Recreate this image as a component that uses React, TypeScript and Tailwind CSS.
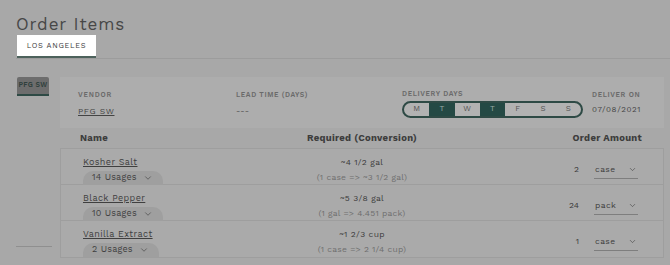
import { ChevronDown } from "lucide-react"

type Item = {
    name: string
    usages: number
    required: string
    conversion: string
    qty: string
    unit: string
}

const items: Item[] = [
    { name: "Kosher Salt", usages: 14, required: "~4 1/2 gal", conversion: "(1 case => ~3 1/2 gal)", qty: "2", unit: "case" },
    { name: "Black Pepper", usages: 10, required: "~5 3/8 gal", conversion: "(1 gal => 4.451 pack)", qty: "24", unit: "pack" },
    { name: "Vanilla Extract", usages: 2, required: "~1 2/3 cup", conversion: "(1 case => 2 1/4 cup)", qty: "1", unit: "case" },
]

const days = [
    { d: "M", on: false },
    { d: "T", on: true },
    { d: "W", on: false },
    { d: "T", on: true },
    { d: "F", on: false },
    { d: "S", on: false },
    { d: "S", on: false },
]

const ItemRow = ({ item }: { item: Item }) => {
    return (
        <div className="flex h-[36px] border-b border-[#9e9e9e] last:border-b-0">
            <div className="w-[190px] pl-[22px] pt-[8px] flex flex-col items-start">
                <a href="/" className="text-[9px] leading-[11px] underline text-[#3f3f3f] tracking-[0.4px]">{item.name}</a>
                <div className="mt-[3px] h-[18px] pl-[9px] pr-[10px] bg-[#9f9f9f] rounded-t-[10px] flex items-center gap-[6px] text-[9px] text-[#3f3f3f] tracking-[0.2px]">
                    <span>{item.usages} Usages</span>
                    <ChevronDown size={10} strokeWidth={1.5} />
                </div>
            </div>
            <div className="flex-1 flex flex-col items-center pt-[8px]">
                <div className="text-[8.5px] leading-[11px] text-[#3a3a3a] tracking-[0.3px]">{item.required}</div>
                <div className="mt-[4px] text-[8.5px] leading-[11px] text-[#6e6e6e] tracking-[0.2px]">{item.conversion}</div>
            </div>
            <div className="w-[190px] flex items-start justify-end pr-[25px] pt-[14px]">
                <div className="w-[26px] text-right text-[8.5px] text-[#3a3a3a]">{item.qty}</div>
                <div className="ml-[15px] w-[44px] border-b border-[#7e7e7e] flex items-center justify-between pb-[2px] pl-[1px] text-[8.5px] text-[#3a3a3a] tracking-[0.4px]">
                    <span>{item.unit}</span>
                    <ChevronDown size={9} strokeWidth={1.5} className="mr-[1px]" />
                </div>
            </div>
        </div>
    )
}

const App = () => {
    return (
        <div className="w-[670px] h-[265px] overflow-hidden bg-[#a8a8a8] font-['Work_Sans','Open_Sans',sans-serif]">
            <div className="pl-4 pt-[14px]">
                <h1 className="text-[17px] leading-[20px] text-[#474747] tracking-[0.9px]">Order Items</h1>
                <div className="mt-[1px] flex border-b border-[#9c9c9c]">
                    <div className="ml-[1px] w-[79px] h-[23px] bg-white border-b-2 border-[#4d625c] flex items-center justify-center text-[7.5px] tracking-[0.7px] text-[#3b3b3b]">
                        LOS ANGELES
                    </div>
                </div>
            </div>
            <div className="flex pl-4 mt-[18px]">
                <div className="w-[37px] flex flex-col h-[170px]">
                    <div className="ml-[1px] w-[32px] h-[19px] bg-[#6d6d6d] rounded-t-[2px] border-b-2 border-[#2e4a45] flex items-center justify-center text-[7px] font-semibold tracking-[0.3px] text-[#2f3f3c]">
                        PFG SW
                    </div>
                    <div className="mt-auto h-px w-[36px] bg-[#8f8f8f]"></div>
                </div>
                <div className="ml-[7px] w-[604px]">
                    <div className="h-[51px] bg-[#adadad] flex pl-[18px] pt-[13px]">
                        <div className="w-[158px]">
                            <div className="text-[7px] font-semibold tracking-[0.8px] text-[#6a6a6a]">VENDOR</div>
                            <a href="/" className="block mt-[4px] text-[8.5px] underline text-[#444] tracking-[0.6px]">PFG SW</a>
                        </div>
                        <div className="w-[166px]">
                            <div className="text-[7px] font-semibold tracking-[0.6px] text-[#6a6a6a]">LEAD TIME (DAYS)</div>
                            <div className="mt-[4px] text-[8.5px] text-[#555]">---</div>
                        </div>
                        <div className="w-[190px] -mt-[1px]">
                            <div className="text-[7px] font-semibold tracking-[0.6px] text-[#6a6a6a]">DELIVERY DAYS</div>
                            <div className="mt-[1px] w-[181px] h-[17px] flex rounded-full border-2 border-[#2e4a45] overflow-hidden bg-[#b2b2b2]">
                                {days.map((day, i) => (
                                    <div
                                        key={i}
                                        className={day.on
                                            ? "flex-1 flex items-center justify-center bg-[#244944] text-[8px] text-[#9aa9a6]"
                                            : "flex-1 flex items-center justify-center text-[8px] text-[#555]"}
                                    >
                                        {day.d}
                                    </div>
                                ))}
                            </div>
                        </div>
                        <div>
                            <div className="text-[7px] font-semibold tracking-[0.6px] text-[#6a6a6a]">DELIVER ON</div>
                            <div className="mt-[3px] text-[8px] text-[#444] tracking-[0.6px]">07/08/2021</div>
                        </div>
                    </div>
                    <div className="h-[20px] flex items-center text-[9.5px] font-bold text-[#3d3d3d] tracking-[0.3px]">
                        <div className="w-[190px] pl-[20px]">Name</div>
                        <div className="flex-1 text-center">Required (Conversion)</div>
                        <div className="w-[190px] text-right pr-[22px]">Order Amount</div>
                    </div>
                    <div className="border border-[#9e9e9e] bg-[#aaaaaa]">
                        {items.map((item) => (
                            <ItemRow key={item.name} item={item} />
                        ))}
                    </div>
                </div>
            </div>
        </div>
    )
}

export default App
